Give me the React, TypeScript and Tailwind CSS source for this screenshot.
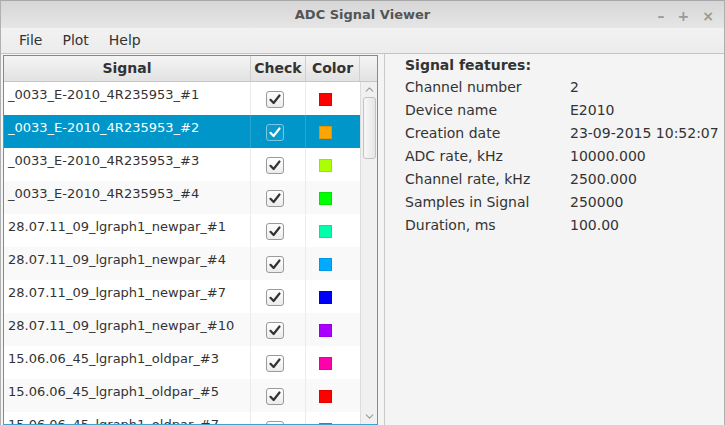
import { ChevronUp, ChevronDown } from 'lucide-react'

const rows = [
  { name: '_0033_E-2010_4R235953_#1', color: '#ff0000' },
  { name: '_0033_E-2010_4R235953_#2', color: '#ffa500' },
  { name: '_0033_E-2010_4R235953_#3', color: '#aaff00' },
  { name: '_0033_E-2010_4R235953_#4', color: '#00ff00' },
  { name: '28.07.11_09_lgraph1_newpar_#1', color: '#00ffaa' },
  { name: '28.07.11_09_lgraph1_newpar_#4', color: '#00aaff' },
  { name: '28.07.11_09_lgraph1_newpar_#7', color: '#0000ff' },
  { name: '28.07.11_09_lgraph1_newpar_#10', color: '#aa00ff' },
  { name: '15.06.06_45_lgraph1_oldpar_#3', color: '#ff00aa' },
  { name: '15.06.06_45_lgraph1_oldpar_#5', color: '#ff0000' },
  { name: '15.06.06_45_lgraph1_oldpar_#7', color: '#ff5500' },
]

const features = [
  ['Channel number', '2'],
  ['Device name', 'E2010'],
  ['Creation date', '23-09-2015 10:52:07'],
  ['ADC rate, kHz', '10000.000'],
  ['Channel rate, kHz', '2500.000'],
  ['Samples in Signal', '250000'],
  ['Duration, ms', '100.00'],
]

function CheckBox({ selected }: { selected: boolean }) {
  return (
    <div
      className={`w-[18px] h-[17px] rounded-[3px] border flex items-center justify-center ${
        selected ? 'border-[#7cc6e2] bg-[#0a9bcc]' : 'border-[#9a9a9a] bg-gradient-to-b from-white to-[#ececec]'
      }`}
    >
      <svg width="12" height="11" viewBox="0 0 12 11">
        <path
          d="M1.5 5.8 L4.6 9 L10.5 1.5"
          fill="none"
          stroke={selected ? '#ffffff' : '#333333'}
          strokeWidth="2.2"
          strokeLinecap="round"
          strokeLinejoin="round"
        />
      </svg>
    </div>
  )
}

export default function App() {
  return (
    <div className="w-[725px] h-[425px] flex flex-col bg-[#f4f4f4] border-x border-[#b0b0b0] overflow-hidden font-['DejaVu_Sans',sans-serif] text-[14px] text-[#333]">
      {/* title bar */}
      <div className="h-[28px] flex items-center bg-gradient-to-b from-[#d6d6d6] to-[#e6e6e6] relative border-t border-[#a8a8a8]">
        <div className="flex-1 text-center font-bold text-[13px] text-[#555]">ADC Signal Viewer</div>
        <div className="absolute right-[10px] top-[5px] flex gap-[13px] text-[#9a9a9a] text-[14px] font-bold">
          <span>–</span>
          <span>+</span>
          <span>×</span>
        </div>
      </div>

      {/* menu bar */}
      <div className="h-[26px] flex items-center gap-[20px] pl-[18px] bg-gradient-to-b from-[#f2f2f2] to-[#ececec] border-b border-[#c4c4c4] text-[#333]">
        <span>File</span>
        <span>Plot</span>
        <span>Help</span>
      </div>

      <div className="flex-1 flex min-h-0">
        {/* table pane */}
        <div className="w-[384px] shrink-0 pl-[2px] pt-[1px] pr-[6px] border-r border-[#c8c8c8] bg-[#f4f4f4]">
          <div className="h-full border border-[#3da2cc] bg-white flex flex-col overflow-hidden">
            <div className="h-[26px] shrink-0 flex bg-gradient-to-b from-[#f5f5f5] to-[#e2e2e2] border-b border-[#c6c6c6] font-bold text-[#333]">
              <div className="w-[247px] flex items-center justify-center border-r border-[#cfcfcf]">Signal</div>
              <div className="w-[55px] flex items-center justify-center border-r border-[#cfcfcf]">Check</div>
              <div className="w-[54px] flex items-center justify-center border-r border-[#cfcfcf]">Color</div>
              <div className="flex-1" />
            </div>
            <div className="flex-1 flex min-h-0">
              <div className="w-[356px] overflow-hidden">
                {rows.map((r, i) => {
                  const sel = i === 1
                  return (
                    <div
                      key={r.name}
                      className={`h-[33px] flex ${
                        sel ? 'bg-[#0096c9] text-white' : i % 2 === 0 ? 'bg-white' : 'bg-[#f9f9f9]'
                      }`}
                    >
                      <div
                        className={`w-[247px] pl-[4px] pt-[3px] text-[13px] whitespace-nowrap border-r ${
                          sel ? 'border-[#2aa3d0]' : 'border-[#ececec]'
                        }`}
                      >
                        {r.name}
                      </div>
                      <div
                        className={`w-[55px] flex items-center pl-[15px] pt-[2px] border-r ${
                          sel ? 'border-[#2aa3d0]' : 'border-[#ececec]'
                        }`}
                      >
                        <CheckBox selected={sel} />
                      </div>
                      <div className="w-[54px] flex items-center pl-[13px] pt-[1px]">
                        <div className="w-[13px] h-[13px] border border-black/10" style={{ backgroundColor: r.color }} />
                      </div>
                    </div>
                  )
                })}
              </div>
              {/* scrollbar */}
              <div className="flex-1 bg-[#f0f0f0] border-l border-[#dcdcdc] flex flex-col items-center">
                <ChevronUp className="w-[13px] h-[13px] text-[#9a9a9a] mt-[1px]" strokeWidth={2} />
                <div className="w-[13px] h-[62px] mt-[1px] rounded-[3px] border border-[#c2c2c2] bg-gradient-to-r from-[#f8f8f8] to-[#e6e6e6]" />
                <div className="flex-1" />
                <ChevronDown className="w-[13px] h-[13px] text-[#9a9a9a] mb-[1px]" strokeWidth={2} />
              </div>
            </div>
          </div>
        </div>

        {/* features pane */}
        <div className="flex-1 pl-[20px] pt-[1px] bg-[#f4f4f4]">
          <div className="font-bold h-[21px] flex items-center">Signal features:</div>
          {features.map(([k, v]) => (
            <div key={k} className="h-[23px] flex items-center">
              <div className="w-[165px]">{k}</div>
              <div>{v}</div>
            </div>
          ))}
        </div>
      </div>
    </div>
  )
}
